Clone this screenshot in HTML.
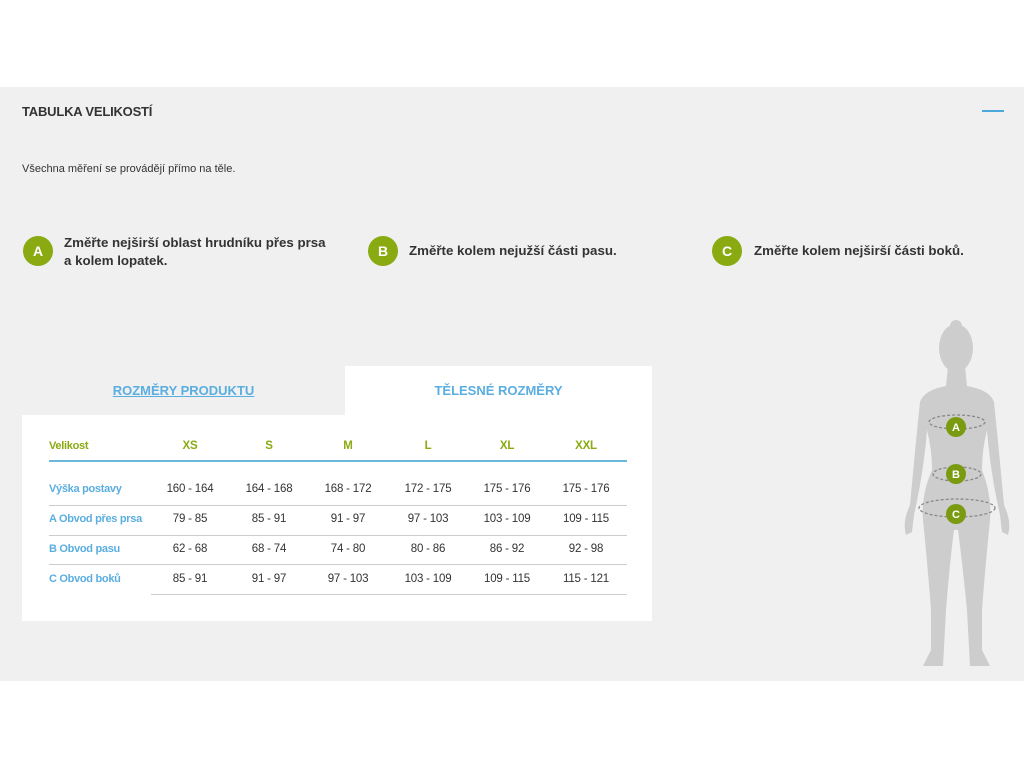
<!DOCTYPE html>
<html><head><meta charset="utf-8"><style>
body{margin:0;width:1024px;height:768px;background:#fff;font-family:"Liberation Sans",sans-serif;position:relative;overflow:hidden}
.sec{position:absolute;left:0;top:87px;width:1024px;height:594px;background:#f0f0f0}
.a{position:absolute}
h2{position:absolute;left:22px;top:104px;margin:0;font-size:13px;font-weight:bold;color:#333;letter-spacing:-.2px}
.dash{position:absolute;left:982px;top:110px;width:22px;height:2px;background:#4aa8dc}
.intro{left:22px;top:163px;font-size:11px;color:#333}
.b{position:absolute;width:30px;height:30px;border-radius:50%;background:#8aaa12;color:#fff;font-weight:bold;font-size:14px;text-align:center;line-height:30px}
.bt{position:absolute;font-size:13.3px;font-weight:bold;color:#333;line-height:18px}
.tab1{left:22px;top:366px;width:323px;height:49px;text-align:center;line-height:49px;color:#5aaee0;font-weight:bold;font-size:13px;text-decoration:underline}
.tab2{left:345px;top:366px;width:307px;height:49px;background:#fff;text-align:center;line-height:49px;color:#5aaee0;font-weight:bold;font-size:13px}
.panel{left:22px;top:415px;width:630px;height:206px;background:#fff}
.c{position:absolute;font-size:11.5px;color:#333;width:80px;text-align:center;margin-left:-40px;letter-spacing:-.2px}
.h{color:#8aaa12;font-weight:bold}
.l{position:absolute;left:49px;font-size:11px;color:#5aaee0;font-weight:bold;letter-spacing:-.3px}
.ln{position:absolute;height:1px;background:#ccc}
</style></head><body>
<div class="sec"></div>
<h2>TABULKA VELIKOSTÍ</h2>
<div class="dash"></div>
<div class="a intro">Všechna měření se provádějí přímo na těle.</div>
<div class="b" style="left:23px;top:236px">A</div>
<div class="bt" style="left:64px;top:234px">Změřte nejširší oblast hrudníku přes prsa<br>a kolem lopatek.</div>
<div class="b" style="left:368px;top:236px">B</div>
<div class="bt" style="left:409px;top:242px">Změřte kolem nejužší části pasu.</div>
<div class="b" style="left:712px;top:236px">C</div>
<div class="bt" style="left:754px;top:242px">Změřte kolem nejširší části boků.</div>
<div class="a tab1">ROZMĚRY PRODUKTU</div>
<div class="a tab2">TĚLESNÉ ROZMĚRY</div>
<div class="a panel"></div>
<div class="l h" style="top:440px;color:#8aaa12">Velikost</div>
<div class="ln" style="left:49px;top:460px;width:578px;height:2px;background:#6bb8dd"></div>
<div class="l" style="top:483px">Výška postavy</div>
<div class="l" style="top:513px">A Obvod přes prsa</div>
<div class="l" style="top:543px">B Obvod pasu</div>
<div class="l" style="top:573px">C Obvod boků</div>
<div class="ln" style="left:49px;top:505px;width:578px"></div>
<div class="ln" style="left:49px;top:535px;width:578px"></div>
<div class="ln" style="left:49px;top:564px;width:578px"></div>
<div class="ln" style="left:151px;top:594px;width:476px"></div>
<div class="c h" style="left:190px;top:440px">XS</div><div class="c h" style="left:269px;top:440px">S</div><div class="c h" style="left:348px;top:440px">M</div><div class="c h" style="left:428px;top:440px">L</div><div class="c h" style="left:507px;top:440px">XL</div><div class="c h" style="left:586px;top:440px">XXL</div>
<div class="c" style="left:190px;top:483px">160 - 164</div><div class="c" style="left:269px;top:483px">164 - 168</div><div class="c" style="left:348px;top:483px">168 - 172</div><div class="c" style="left:428px;top:483px">172 - 175</div><div class="c" style="left:507px;top:483px">175 - 176</div><div class="c" style="left:586px;top:483px">175 - 176</div>
<div class="c" style="left:190px;top:513px">79 - 85</div><div class="c" style="left:269px;top:513px">85 - 91</div><div class="c" style="left:348px;top:513px">91 - 97</div><div class="c" style="left:428px;top:513px">97 - 103</div><div class="c" style="left:507px;top:513px">103 - 109</div><div class="c" style="left:586px;top:513px">109 - 115</div>
<div class="c" style="left:190px;top:543px">62 - 68</div><div class="c" style="left:269px;top:543px">68 - 74</div><div class="c" style="left:348px;top:543px">74 - 80</div><div class="c" style="left:428px;top:543px">80 - 86</div><div class="c" style="left:507px;top:543px">86 - 92</div><div class="c" style="left:586px;top:543px">92 - 98</div>
<div class="c" style="left:190px;top:573px">85 - 91</div><div class="c" style="left:269px;top:573px">91 - 97</div><div class="c" style="left:348px;top:573px">97 - 103</div><div class="c" style="left:428px;top:573px">103 - 109</div><div class="c" style="left:507px;top:573px">109 - 115</div><div class="c" style="left:586px;top:573px">115 - 121</div>
<svg class="a" style="left:890px;top:310px" width="134" height="370" viewBox="0 0 134 370">
<g fill="#cdcdcd">
<ellipse cx="66" cy="38" rx="17" ry="24"/>
<circle cx="66" cy="16" r="6"/>
<path d="M58 56 L75 56 L77 76 Q100 80 104 92 Q108 130 114 195 Q122 212 118 225 L112 222 L110 205 Q100 160 97 120 Q92 140 92 160 Q102 185 100 210 Q95 260 92 300 L92 340 Q98 352 100 356 L80 356 L77 300 Q72 250 68 220 L64 220 Q60 250 56 300 L53 356 L33 356 Q36 350 41 340 L41 300 Q38 260 33 210 Q31 185 42 160 Q42 140 37 120 Q34 160 24 205 L22 222 L16 225 Q12 212 20 195 Q26 130 30 92 Q34 80 56 76 Z"/>
</g>
<g fill="none" stroke-dasharray="3 2" stroke-width="1.3">
<ellipse cx="67" cy="112" rx="28" ry="7" stroke="#888"/>
<ellipse cx="67" cy="164" rx="24" ry="7" stroke="#888"/>
<ellipse cx="67" cy="198" rx="38" ry="9" stroke="#888"/>
</g>
<g fill="#7a9a10" font-family="Liberation Sans" font-weight="bold" font-size="11" text-anchor="middle">
<circle cx="66" cy="117" r="10"/><circle cx="66" cy="164" r="10"/><circle cx="66" cy="204" r="10"/>
<text x="66" y="121" fill="#fff">A</text><text x="66" y="168" fill="#fff">B</text><text x="66" y="208" fill="#fff">C</text>
</g>
</svg>
</body></html>
